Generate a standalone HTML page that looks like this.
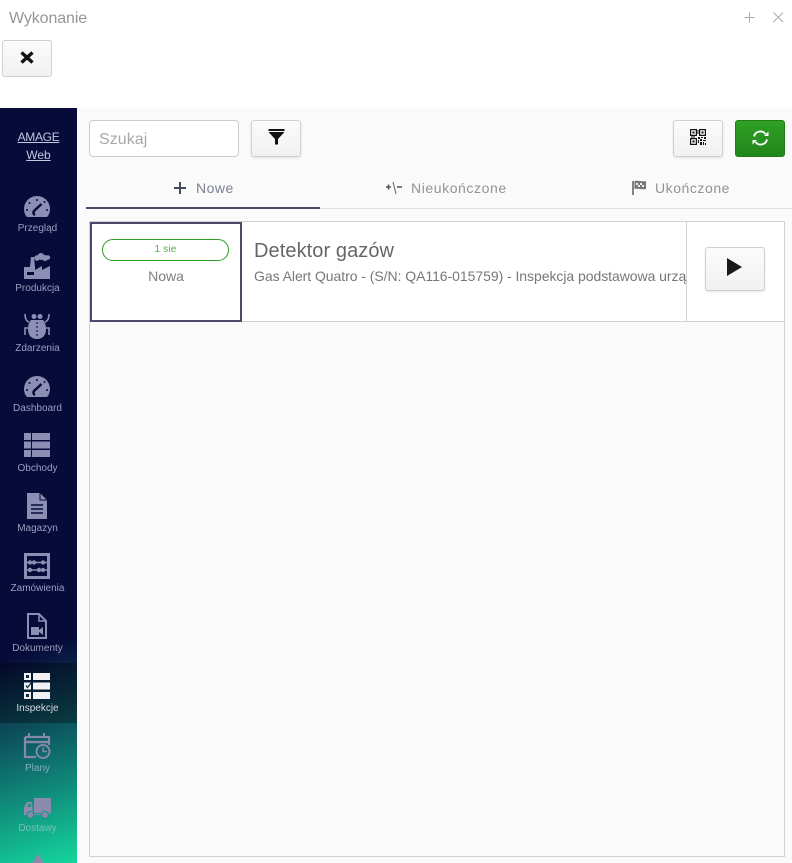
<!DOCTYPE html>
<html><head><meta charset="utf-8">
<style>
html,body{margin:0;padding:0;background:#fff}
#p{position:relative;width:792px;height:863px;overflow:hidden;background:#fff;font-family:"Liberation Sans",sans-serif}
.a{position:absolute}
.t{position:absolute;white-space:nowrap}
#side{left:0;top:108px;width:77px;height:755px;overflow:hidden;background:linear-gradient(162deg,#070b3a 0%,#070b3a 71%,#0c4a58 80%,#0f7f75 88%,#14d69c 100%)}
.lab{position:absolute;left:-1px;width:77px;text-align:center;font-size:10px;color:#9b9fc0;white-space:nowrap}
.btn{position:absolute;box-sizing:border-box;border:1px solid #d0d0d0;border-radius:3px;background:linear-gradient(#fbfbfb,#f1f1f1);box-shadow:0 1px 2px rgba(0,0,0,.1)}
svg{position:absolute;overflow:visible}
.ic{fill:#8c8eb4}
</style></head><body>
<div id="p">
<div class="t" style="left:9px;top:10px;font-size:16px;color:#969696;letter-spacing:-.1px">Wykonanie</div>
<svg style="left:744px;top:12px" width="40" height="12"><path d="M5.500 0.500V10.500M0.500 5.500H10.500" stroke="#aaa" fill="none"/><path d="M29.500 0.500L39 10M39 0.500L29.500 10" stroke="#aaa" fill="none"/></svg>
<div class="btn" style="left:2px;top:40px;width:50px;height:37px;box-shadow:none"></div>
<svg style="left:20px;top:51px" width="14" height="13"><path d="M1.500 1.500L12.500 11.500M12.500 1.500L1.500 11.500" stroke="#111" stroke-width="3.400" fill="none"/></svg>

<div class="a" style="left:77px;top:108px;width:715px;height:755px;background:#fafafa"></div>

<div class="a" id="side">
 <div class="a" style="left:0;top:555px;width:77px;height:60px;background:rgba(0,0,0,.3)"></div>
 <div class="lab" style="top:22px;left:0;font-size:12px;color:#c4c6dc;text-decoration:underline;letter-spacing:-.3px">AMAGE</div>
 <div class="lab" style="top:40px;left:0;font-size:12px;color:#c4c6dc;text-decoration:underline">Web</div>

 <svg style="left:24px;top:88px" width="26" height="22"><path class="ic" d="M13 0C5.800 0 0 5.800 0 13c0 3.200 1 6 3 8h20c2-2 3-4.800 3-8C26 5.800 20.200 0 13 0z"/><path d="M11 19a2.600 2.600 0 0 1-1-4l7.500-7" stroke="#070b3a" stroke-width="2.500" fill="none"/><circle cx="13" cy="4" r="1" fill="#070b3a"/><circle cx="5.500" cy="7" r="1" fill="#070b3a"/><circle cx="20.500" cy="6" r="1" fill="#070b3a"/><circle cx="3" cy="14" r="1" fill="#070b3a"/><circle cx="23" cy="14" r="1" fill="#070b3a"/></svg>
 <div class="lab" style="top:115px">Przegląd</div>

 <svg style="left:24px;top:145px" width="27" height="26"><path class="ic" d="M0 26V14h6L7 4h3l1 10v3l7-4v4l8-4v13z"/><g class="ic"><circle cx="13" cy="5" r="2.800"/><circle cx="17" cy="3.500" r="3.500"/><circle cx="21" cy="5" r="3"/><circle cx="24" cy="4.500" r="2.200"/></g><rect x="3" y="19" width="7" height="3" fill="#070b3a"/></svg>
 <div class="lab" style="top:175px">Produkcja</div>

 <svg style="left:24px;top:205px" width="26" height="26"><g class="ic"><circle cx="10" cy="3.500" r="2.500"/><circle cx="16" cy="3.500" r="2.500"/><path d="M7 7h12c2 2 3 5 3 9 0 6-3 10-9 10S4 22 4 16c0-4 1-7 3-9z"/></g><path d="M13 9v16" stroke="#070b3a" fill="none" stroke-dasharray="2 2"/><path d="M5 9C2 8 1 5 1 1M21 9c3-1 4-4 4-8M4 15H1v7M22 15h3v7" stroke="#8c8eb4" stroke-width="1.600" fill="none"/></svg>
 <div class="lab" style="top:235px">Zdarzenia</div>

 <svg style="left:24px;top:268px" width="26" height="22"><path class="ic" d="M13 0C5.800 0 0 5.800 0 13c0 3.200 1 6 3 8h20c2-2 3-4.800 3-8C26 5.800 20.200 0 13 0z"/><path d="M11 19a2.600 2.600 0 0 1-1-4l7.500-7" stroke="#070b3a" stroke-width="2.500" fill="none"/><circle cx="13" cy="4" r="1" fill="#070b3a"/><circle cx="5.500" cy="7" r="1" fill="#070b3a"/><circle cx="20.500" cy="6" r="1" fill="#070b3a"/><circle cx="3" cy="14" r="1" fill="#070b3a"/><circle cx="23" cy="14" r="1" fill="#070b3a"/></svg>
 <div class="lab" style="top:295px">Dashboard</div>

 <svg style="left:24px;top:325px" width="26" height="24"><g class="ic"><rect width="7" height="7"/><rect x="8" width="18" height="7"/><rect y="8.500" width="7" height="7"/><rect x="8" y="8.500" width="18" height="7"/><rect y="17" width="7" height="7"/><rect x="8" y="17" width="18" height="7"/></g></svg>
 <div class="lab" style="top:355px">Obchody</div>

 <svg style="left:27px;top:385px" width="20" height="26"><path class="ic" d="M0 0h13l7 7v19H0z"/><path d="M13 0v7h7" stroke="#070b3a" fill="none"/><path d="M4 12h12M4 16h12M4 20h12" stroke="#070b3a" stroke-width="1.500"/></svg>
 <div class="lab" style="top:415px">Magazyn</div>

 <svg style="left:24px;top:445px" width="26" height="26"><rect x="1.500" y="1.500" width="23" height="23" fill="none" stroke="#8c8eb4" stroke-width="3"/><path d="M3 9.500h20M3 17h20" stroke="#8c8eb4" stroke-width="1.500"/><g class="ic"><circle cx="6" cy="9.500" r="2.200"/><circle cx="10" cy="9.500" r="2.200"/><circle cx="19" cy="9.500" r="2.200"/><circle cx="6" cy="17" r="2.200"/><circle cx="15" cy="17" r="2.200"/><circle cx="19" cy="17" r="2.200"/></g></svg>
 <div class="lab" style="top:475px">Zamówienia</div>

 <svg style="left:27px;top:505px" width="20" height="26"><path d="M1 1h11l7 7v17H1z" fill="none" stroke="#8c8eb4" stroke-width="2"/><path d="M12 1v7h7" fill="none" stroke="#8c8eb4" stroke-width="1.500"/><path class="ic" d="M4 14h8v8H4zM12 17l4-3v8l-4-3z"/></svg>
 <div class="lab" style="top:535px">Dokumenty</div>

 <svg style="left:24px;top:565px" width="27" height="26"><g fill="#f2f2f4"><rect x="0" y="0" width="7" height="7"/><rect x="9" y="0" width="17" height="7"/><rect x="0" y="9.500" width="7" height="7"/><rect x="9" y="9.500" width="17" height="7"/><rect x="0" y="19" width="7" height="7"/><rect x="9" y="19" width="17" height="7"/></g><rect x="2" y="2" width="3" height="3" fill="#0a2a40"/><rect x="2" y="21" width="3" height="3" fill="#0a2a40"/><path d="M2 12.500l1.500 2 4-5" stroke="#0a2a40" stroke-width="1.300" fill="none"/></svg>
 <div class="lab" style="top:595px;color:#d8dae6">Inspekcje</div>

 <svg style="left:24px;top:625px" width="27" height="26"><path d="M1 4h24v8M1 4v20h11" fill="none" stroke="#8488aa" stroke-width="2.200"/><path d="M1 9h24" stroke="#8488aa" stroke-width="2.500" fill="none"/><path d="M5 0v5M20 0v5" stroke="#8488aa" stroke-width="2"/><circle cx="19" cy="18.500" r="6.500" fill="none" stroke="#8488aa" stroke-width="2"/><path d="M19 14.500V18.500h4" stroke="#8488aa" stroke-width="1.500" fill="none"/></svg>
 <div class="lab" style="top:655px;color:#86aebb">Plany</div>

 <svg style="left:24px;top:690px" width="27" height="22"><path d="M10 0h17v15H10zM8 4H3L0 9v8h26v-1H9z" fill="#8a8aae"/><circle cx="6.500" cy="17" r="3.500" fill="#8a8aae" stroke="#179080"/><circle cx="21" cy="17" r="3.500" fill="#8a8aae" stroke="#179080"/><path d="M3 9l2-3h2v3z" fill="#1d8f7c"/></svg>
 <div class="lab" style="top:715px;color:#78c0b8">Dostawy</div>

 <svg style="left:31px;top:746px" width="14" height="9"><path d="M7 0l6 9H1z" fill="#8a8aae"/></svg>
</div>

<div class="a" style="left:89px;top:120px;width:150px;height:37px;box-sizing:border-box;border:1px solid #ccc;border-radius:4px;background:#fff"></div>
<div class="t" style="left:99px;top:131px;font-size:16px;color:#a8a8a8;letter-spacing:.05px">Szukaj</div>

<div class="btn" style="left:251px;top:120px;width:50px;height:37px"></div>
<svg style="left:268px;top:129px" width="17" height="16"><rect width="16" height="2" x="0.500" fill="#111"/><path d="M0.500 3h16L10 10v5.500H7V10z" fill="#111"/></svg>

<div class="btn" style="left:673px;top:120px;width:50px;height:37px"></div>
<svg style="left:690px;top:129px" width="16" height="16"><g fill="none" stroke="#111" stroke-width="1.200"><rect x=".6" y=".6" width="5.800" height="5.800"/><rect x="9.600" y=".6" width="5.800" height="5.800"/><rect x=".6" y="9.600" width="5.800" height="5.800"/></g><g fill="#111"><rect x="2.500" y="2.500" width="2" height="2"/><rect x="11.500" y="2.500" width="2" height="2"/><rect x="2.500" y="11.500" width="2" height="2"/><rect x="7.500" y="1" width="1" height="4"/><rect x="8" y="8" width="2" height="2"/><rect x="11" y="8" width="2" height="1"/><rect x="14" y="8" width="2" height="2"/><rect x="8" y="11" width="1" height="3"/><rect x="10" y="10" width="2" height="2"/><rect x="13" y="11" width="3" height="1"/><rect x="10" y="13" width="2" height="3"/><rect x="13" y="13" width="1" height="3"/><rect x="15" y="14" width="1" height="2"/><rect x="1" y="7.500" width="4" height="1"/></g></svg>

<div class="a" style="left:735px;top:120px;width:50px;height:37px;box-sizing:border-box;border:1px solid #1f7f14;border-radius:3px;background:linear-gradient(#2fa025,#22861a)"></div>
<svg style="left:752px;top:130px" width="17" height="16"><path d="M2 6.500A6.500 6.500 0 0 1 13.500 4M15 9.500A6.500 6.500 0 0 1 3.500 12" fill="none" stroke="#fff" stroke-width="1.800"/><path d="M12 6h4.500V1.500zM5 10H.5v4.500z" fill="#fff"/></svg>

<div class="a" style="left:86px;top:208px;width:706px;height:1px;background:#e0e0e0"></div>
<div class="a" style="left:86px;top:207px;width:234px;height:2px;background:#4a4a6a"></div>

<svg style="left:174px;top:182px" width="12" height="12"><path d="M6 0v12M0 6h12" stroke="#444a5e" stroke-width="2" fill="none"/></svg>
<div class="t" style="left:196px;top:180px;font-size:14px;color:#7d8192;letter-spacing:.5px">Nowe</div>

<svg style="left:386px;top:182px" width="16" height="12"><path d="M0 5h5M2.500 2.500v5" stroke="#555" stroke-width="1.500" fill="none"/><path d="M7 0l3 12" stroke="#666" fill="none"/><path d="M11 5h5" stroke="#555" stroke-width="1.500" fill="none"/></svg>
<div class="t" style="left:411px;top:180px;font-size:14px;color:#939393;letter-spacing:.58px">Nieukończone</div>

<svg style="left:631px;top:180px" width="16" height="15"><path d="M2 1v14" stroke="#777" stroke-width="1.800"/><path d="M3.500 1c4-1 7 1 11.500 0v8c-4 1-7.500-1-11.500 0z" fill="#777"/><path d="M5 3h2v2H5zM9 3h2v2H9zM7 5h2v2H7zM11 5h2v2h-2z" fill="#eee"/></svg>
<div class="t" style="left:655px;top:180px;font-size:14px;color:#939393;letter-spacing:.55px">Ukończone</div>

<div class="a" style="left:89px;top:221px;width:696px;height:636px;box-sizing:border-box;border:1px solid #d2d2d2;background:#fafafa"></div>
<div class="a" style="left:90px;top:222px;width:694px;height:99px;background:#fff"></div>
<div class="a" style="left:89px;top:321px;width:696px;height:1px;background:#d2d2d2"></div>
<div class="a" style="left:90px;top:222px;width:152px;height:100px;box-sizing:border-box;border:2px solid #4a4a6a;background:#fff"></div>
<div class="a" style="left:102px;top:239px;width:127px;height:22px;box-sizing:border-box;border:1px solid #2f9e24;border-radius:11px"></div>
<div class="t" style="left:102px;top:244px;width:127px;text-align:center;font-size:10px;color:#4dae44;letter-spacing:.2px">1 sie</div>
<div class="t" style="left:90px;top:268px;width:152px;text-align:center;font-size:14px;color:#7e7e7e">Nowa</div>

<div class="a" style="left:242px;top:222px;width:444px;height:99px;overflow:hidden">
 <div class="t" style="left:12px;top:18px;font-size:20px;color:#666;letter-spacing:.08px">Detektor gazów</div>
 <div class="t" style="left:12px;top:46px;font-size:14px;color:#777;letter-spacing:-.05px">Gas Alert Quatro - (S/N: QA116-015759) - Inspekcja podstawowa urządzenia</div>
</div>
<div class="a" style="left:686px;top:222px;width:1px;height:99px;background:#d2d2d2"></div>
<div class="btn" style="left:705px;top:247px;width:60px;height:44px"></div>
<svg style="left:727px;top:258px" width="16" height="18"><path d="M0 0l15 9L0 18z" fill="#1a1a1a"/></svg>
</div>
</body></html>
